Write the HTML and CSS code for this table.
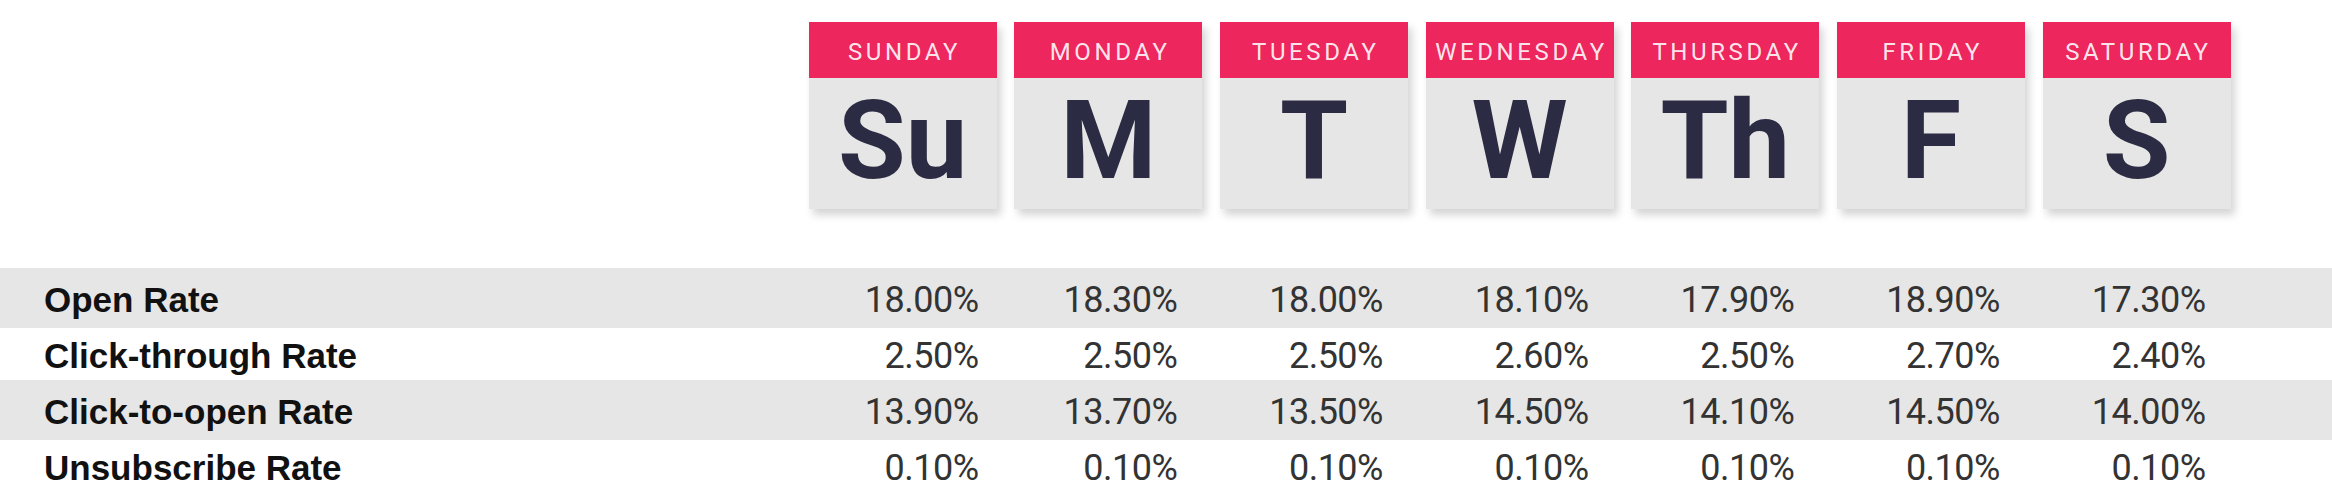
FILE: index.html
```html
<!DOCTYPE html>
<html lang="en">
<head>
<meta charset="utf-8">
<title>Email metrics by day of week</title>
<link rel="stylesheet" href="styles.css">
</head>
<body>
<div class="sheet">
  <div class="days">
    <div class="spacer"></div>
    <div class="card"><div class="card-top">SUNDAY</div><div class="card-body">Su</div></div>
    <div class="card"><div class="card-top">MONDAY</div><div class="card-body">M</div></div>
    <div class="card"><div class="card-top">TUESDAY</div><div class="card-body">T</div></div>
    <div class="card"><div class="card-top">WEDNESDAY</div><div class="card-body">W</div></div>
    <div class="card"><div class="card-top">THURSDAY</div><div class="card-body">Th</div></div>
    <div class="card"><div class="card-top">FRIDAY</div><div class="card-body">F</div></div>
    <div class="card"><div class="card-top">SATURDAY</div><div class="card-body">S</div></div>
  </div>

  <div class="table">
    <div class="row row-shaded row-tall">
      <div class="label">Open Rate</div>
      <div class="val val-first">18.00%</div>
      <div class="val">18.30%</div>
      <div class="val">18.00%</div>
      <div class="val">18.10%</div>
      <div class="val">17.90%</div>
      <div class="val">18.90%</div>
      <div class="val">17.30%</div>
    </div>
    <div class="row">
      <div class="label">Click-through Rate</div>
      <div class="val val-first">2.50%</div>
      <div class="val">2.50%</div>
      <div class="val">2.50%</div>
      <div class="val">2.60%</div>
      <div class="val">2.50%</div>
      <div class="val">2.70%</div>
      <div class="val">2.40%</div>
    </div>
    <div class="row row-shaded row-tall">
      <div class="label">Click-to-open Rate</div>
      <div class="val val-first">13.90%</div>
      <div class="val">13.70%</div>
      <div class="val">13.50%</div>
      <div class="val">14.50%</div>
      <div class="val">14.10%</div>
      <div class="val">14.50%</div>
      <div class="val">14.00%</div>
    </div>
    <div class="row">
      <div class="label">Unsubscribe Rate</div>
      <div class="val val-first">0.10%</div>
      <div class="val">0.10%</div>
      <div class="val">0.10%</div>
      <div class="val">0.10%</div>
      <div class="val">0.10%</div>
      <div class="val">0.10%</div>
      <div class="val">0.10%</div>
    </div>
  </div>
</div>
</body>
</html>
```

FILE: styles.css
```css
* { box-sizing: border-box; }

html, body {
  margin: 0;
  padding: 0;
  background: #ffffff;
}

body {
  width: 2332px;
  height: 490px;
  overflow: hidden;
  font-family: Roboto, "Liberation Sans", Arial, sans-serif;
}

.sheet {
  display: flex;
  flex-direction: column;
}

.days,
.row {
  display: grid;
  grid-template-columns: 791px repeat(7, 188px) 1fr;
  column-gap: 17.67px;
}

.days {
  padding-top: 22px;
}

.card {
  height: 187px;
  display: flex;
  flex-direction: column;
  box-shadow: 4px 6px 8px rgba(0, 0, 0, 0.17);
}

.card-top {
  height: 56px;
  background: #ee265e;
  color: rgba(255, 255, 255, 0.9);
  font-family: Roboto, "Liberation Sans", sans-serif;
  font-size: 24px;
  font-weight: 400;
  letter-spacing: 3.6px;
  padding-left: 3.6px;
  display: flex;
  align-items: center;
  justify-content: center;
  padding-top: 4px;
  white-space: nowrap;
}

.card-body {
  flex: 1;
  background: #e6e6e6;
  color: #2b2c43;
  font-family: Roboto, "Liberation Sans", sans-serif;
  font-weight: 700;
  font-size: 110px;
  line-height: 1;
  display: flex;
  align-items: center;
  justify-content: center;
  padding-bottom: 6px;
}

.table {
  margin-top: 59px;
  display: flex;
  flex-direction: column;
}

.row {
  height: 52px;
  align-items: center;
}

.row-tall {
  height: 60px;
}

.row-shaded {
  background: #e6e6e6;
}

.label {
  padding-left: 44px;
  font-family: "Liberation Sans", Arial, sans-serif;
  font-weight: 700;
  font-size: 35px;
  color: #111111;
  white-space: nowrap;
  padding-top: 4px;
}

.val {
  text-align: right;
  padding-right: 25px;
  font-family: Roboto, "Liberation Sans", sans-serif;
  font-weight: 400;
  font-size: 36px;
  letter-spacing: -0.5px;
  color: #333333;
  padding-top: 4px;
}

.val-first {
  padding-right: 18px;
}
```
